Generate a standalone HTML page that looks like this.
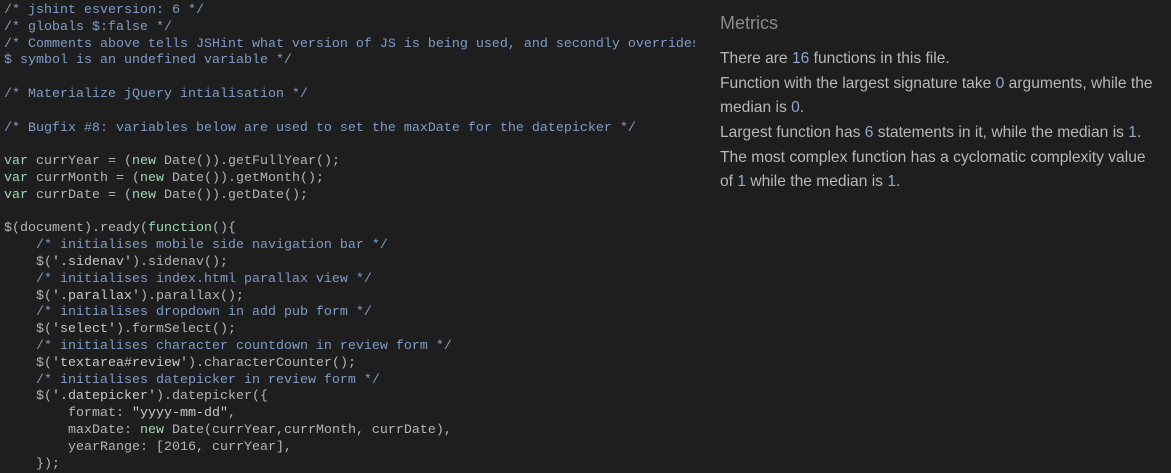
<!DOCTYPE html>
<html><head><meta charset="utf-8"><style>
html,body{margin:0;padding:0;background:#1e1e1e;width:1171px;height:462px;overflow:hidden}
pre{position:absolute;left:4px;top:3px;margin:0;width:691px;overflow:hidden;font-family:"Liberation Mono",monospace;font-size:13.33px;line-height:16.8px;color:#b4b4b4}
.c{color:#7f9cc8}.k{color:#9fd8b4}.s{color:#c8c8c8}
.m{position:absolute;left:720px;top:11px;width:440px;font-family:"Liberation Sans",sans-serif;color:#b8b8b8;font-size:15.6px;line-height:24px}
.m h2{margin:0 0 12px;font-weight:normal;font-size:18px;color:#8a8a8a}
.m p{margin:0 0 1px}
.n{color:#8fa5cc}
</style></head><body>
<pre><span class="c">/* jshint esversion: 6 */
/* globals $:false */
/* Comments above tells JSHint what version of JS is being used, and secondly overrides
$ symbol is an undefined variable */

/* Materialize jQuery intialisation */

/* Bugfix #8: variables below are used to set the maxDate for the datepicker */</span>

<span class="k">var</span> currYear = (<span class="k">new</span> Date()).getFullYear();
<span class="k">var</span> currMonth = (<span class="k">new</span> Date()).getMonth();
<span class="k">var</span> currDate = (<span class="k">new</span> Date()).getDate();

$(document).ready(<span class="k">function</span>(){
    <span class="c">/* initialises mobile side navigation bar */</span>
    $(<span class="s">'.sidenav'</span>).sidenav();
    <span class="c">/* initialises index.html parallax view */</span>
    $(<span class="s">'.parallax'</span>).parallax();
    <span class="c">/* initialises dropdown in add pub form */</span>
    $(<span class="s">'select'</span>).formSelect();
    <span class="c">/* initialises character countdown in review form */</span>
    $(<span class="s">'textarea#review'</span>).characterCounter();
    <span class="c">/* initialises datepicker in review form */</span>
    $(<span class="s">'.datepicker'</span>).datepicker({
        format: <span class="s">"yyyy-mm-dd"</span>,
        maxDate: <span class="k">new</span> Date(currYear,currMonth, currDate),
        yearRange: [2016, currYear],
    });</pre>
<div class="m">
<h2>Metrics</h2>
<p>There are <span class="n">16</span> functions in this file.</p>
<p>Function with the largest signature take <span class="n">0</span> arguments, while the median is <span class="n">0</span>.</p>
<p>Largest function has <span class="n">6</span> statements in it, while the median is <span class="n">1</span>.</p>
<p>The most complex function has a cyclomatic complexity value of <span class="n">1</span> while the median is <span class="n">1</span>.</p>
</div>
</body></html>
